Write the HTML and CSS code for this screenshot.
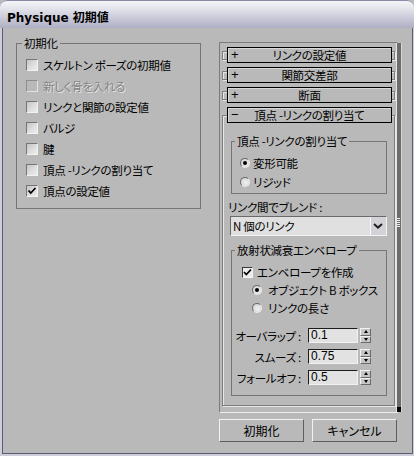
FILE: index.html
```html
<!DOCTYPE html>
<html lang="ja">
<head>
<meta charset="utf-8">
<title>Physique 初期値</title>
<link rel="stylesheet" href="styles.css">
</head>
<body>
<div class="window">
  <div class="titlebar"><span class="title">Physique 初期値</span></div>
  <div class="client">
    <fieldset class="group group-init">
      <legend>初期化</legend>
      <div class="row"><span class="cb"></span><span>スケルトン ポーズの初期値</span></div>
      <div class="row disabled"><span class="cb"></span><span>新しく骨を入れる</span></div>
      <div class="row"><span class="cb"></span><span>リンクと関節の設定値</span></div>
      <div class="row"><span class="cb"></span><span>バルジ</span></div>
      <div class="row"><span class="cb"></span><span>腱</span></div>
      <div class="row"><span class="cb"></span><span>頂点 -リンクの割り当て</span></div>
      <div class="row"><span class="cb"><svg class="check" viewBox="0 0 12 12" width="12" height="12"><polyline points="2.5,5.5 4.8,8 9.5,3" /></svg></span><span>頂点の設定値</span></div>
    </fieldset>
    <div class="right">
      <div class="panel">
        <div class="panel-body">
          <div class="rollout"><div class="rhead"><span class="sign">+</span><span class="rtitle">リンクの設定値</span><span></span></div></div>
          <div class="rollout"><div class="rhead"><span class="sign">+</span><span class="rtitle">関節交差部</span><span></span></div></div>
          <div class="rollout before-open"><div class="rhead"><span class="sign">+</span><span class="rtitle">断面</span><span></span></div></div>
          <div class="rollout open">
            <div class="rhead"><span class="sign">−</span><span class="rtitle">頂点 -リンクの割り当て</span><span></span></div>
            <fieldset class="group group-assign">
              <legend>頂点 -リンクの割り当て</legend>
              <div class="rrow"><span class="radio on"></span><span>変形可能</span></div>
              <div class="rrow"><span class="radio"></span><span>リジッド</span></div>
            </fieldset>
            <div class="blend-label">リンク間でブレンド :</div>
            <div class="dropdown">
              <span class="dd-text">N 個のリンク</span>
              <span class="dd-btn"><svg viewBox="0 0 10 6" width="10" height="6"><polyline points="1,1 5,4.6 9,1" /></svg></span>
            </div>
            <fieldset class="group group-env">
              <legend>放射状減衰エンベロープ</legend>
              <div class="erow"><span class="cb2"><svg class="check" viewBox="0 0 11 11" width="11" height="11"><polyline points="2,5 4.3,7.5 9,2.5" /></svg></span><span>エンベロープを作成</span></div>
              <div class="rrow sub"><span class="radio on"></span><span>オブジェクト B ボックス</span></div>
              <div class="rrow sub"><span class="radio"></span><span>リンクの長さ</span></div>
              <div class="spins">
                <div class="spin"><span class="slabel">オーバラップ :</span><span class="field">0.1</span><span class="arrows"><span class="arr up"></span><span class="arr down"></span></span></div>
                <div class="spin"><span class="slabel">スムーズ :</span><span class="field">0.75</span><span class="arrows"><span class="arr up"></span><span class="arr down"></span></span></div>
                <div class="spin"><span class="slabel">フォールオフ :</span><span class="field">0.5</span><span class="arrows"><span class="arr up"></span><span class="arr down"></span></span></div>
              </div>
            </fieldset>
          </div>
        </div>
        <div class="scrollbar"><span class="grip"></span><span class="thumb-end"></span></div>
      </div>
      <div class="buttons"><button class="btn">初期化</button><button class="btn">キャンセル</button></div>
    </div>
  </div>
</div>
</body>
</html>
```
FILE: styles.css
```css
html, body {
  margin: 0;
  padding: 0;
  background: #b9b9b9;
}

.window {
  width: 414px;
  height: 456px;
  box-sizing: border-box;
  display: flex;
  flex-direction: column;
  background: #cdcdd9;
  padding: 0 1px 2px 2px;
  border-radius: 7px 7px 0 0;
  overflow: hidden;
  font-family: "Noto Sans CJK JP", sans-serif;
  font-size: 11.5px;
  letter-spacing: -0.3px;
  font-feature-settings: "palt";
  color: #000;
}

.titlebar {
  height: 28px;
  box-sizing: border-box;
  margin: 0 -1px 0 -2px;
  border-top: 1px solid #8a8aa4;
  border-radius: 7px 7px 0 0;
  background: linear-gradient(to bottom, #f4f4f8 0%, #e6e6ee 25%, #c4c4d4 70%, #b0b0c4 100%);
  display: flex;
  align-items: center;
  padding: 3px 0 0 7px;
}

.title {
  font-family: "DejaVu Sans", "Noto Sans CJK JP", sans-serif;
  font-weight: bold;
  font-size: 12px;
  letter-spacing: 0;
  font-feature-settings: normal;
}

.client {
  flex: 1;
  display: flex;
  align-items: flex-start;
  background: #b9b9b9;
  border: 1px solid #5c5c74;
  border-top: none;
}

/* group boxes */
.group {
  margin: 0;
  border: 1px solid #767676;
  min-inline-size: 0;
}

.group legend {
  padding: 0 2px;
  line-height: 14px;
}

.group-init {
  width: 185px;
  box-sizing: border-box;
  margin: 8px 0 0 13px;
  padding: 4px 8px 7px 9px;
}

.group-init legend {
  margin-left: -4px;
}

.row {
  height: 21px;
  display: flex;
  align-items: center;
  gap: 5px;
  line-height: 14px;
  white-space: nowrap;
}

.cb {
  width: 12px;
  height: 12px;
  box-sizing: border-box;
  border: 1px solid;
  border-color: #767676 #f2f2f2 #f2f2f2 #767676;
  background: linear-gradient(135deg, #c4c4c4 0%, #dedede 55%, #ececec 100%);
  display: flex;
  align-items: center;
  justify-content: center;
  flex: none;
}

.check {
  display: block;
  fill: none;
  stroke: #000;
  stroke-width: 1.8;
}

.row .check {
  margin: -1px;
}

.row.disabled {
  color: #858585;
  text-shadow: 1px 1px 0 #e4e4e4;
}

.row.disabled .cb {
  background: #b9b9b9;
  border-color: #8c8c8c #e2e2e2 #e2e2e2 #8c8c8c;
}

/* right side */
.right {
  margin: 14px 0 0 18px;
}

.panel {
  width: 179px;
  height: 371px;
  box-sizing: border-box;
  display: flex;
  border: 1px solid;
  border-color: #7c7c7c #ececec #ececec #7c7c7c;
}

.panel-body {
  flex: 1;
  padding: 8px 1px 0 2px;
}

.scrollbar {
  width: 8px;
  box-sizing: border-box;
  border-left: 1px solid #e4e4e4;
  border-right: 1px solid #d6d6d6;
  background: #6c6c6c;
  display: flex;
  flex-direction: column;
  align-items: center;
}

.grip {
  width: 3px;
  height: 10px;
  margin-top: 175px;
  background: repeating-linear-gradient(to bottom, #f0f0f0 0 1px, transparent 1px 2px);
}

.thumb-end {
  margin-top: auto;
  width: 4px;
  height: 5px;
  background: #000;
}

/* rollouts */
.rollout {
  border: 1px solid #7e7e7e;
  box-shadow: inset 1px 1px 0 #e6e6e6, 1px 1px 0 #e6e6e6;
  padding: 0 2px 0 4px;
  height: 7px;
  margin-bottom: 11px;
}

.rollout.before-open {
  margin-bottom: 15px;
}

.rhead {
  height: 16px;
  box-sizing: border-box;
  margin: -5px 0 -4px 0;
  border: 1px solid #000;
  background: #b9b9b9;
  box-shadow: inset 1px 1px 0 #d8d8d8;
  display: grid;
  grid-template-columns: 18px 1fr 18px;
  line-height: 14px;
  white-space: nowrap;
}

.sign {
  padding-left: 3px;
  font-family: "Liberation Sans", sans-serif;
  font-size: 13px;
}

.rtitle {
  text-align: center;
}

.rollout.open {
  height: auto;
  margin-bottom: 0;
}

.rollout.open > .rhead {
  margin: -9px 0 0 0;
}

.group-assign {
  margin: 11px 5px 0 4px;
  padding: 5px 8px 2px 8px;
}

.group-assign legend,
.group-env legend {
  margin-left: -5px;
}

.rrow {
  height: 19px;
  display: flex;
  align-items: center;
  gap: 3px;
  line-height: 14px;
  white-space: nowrap;
}

.radio {
  width: 10px;
  height: 10px;
  box-sizing: border-box;
  border-radius: 50%;
  border: 1px solid;
  border-color: #6a6a6a #ececec #ececec #6a6a6a;
  background: radial-gradient(circle at 60% 60%, #f0f0f0 0%, #d4d4d4 80%);
  display: flex;
  align-items: center;
  justify-content: center;
  flex: none;
}

.radio.on::after {
  content: "";
  width: 4px;
  height: 4px;
  border-radius: 50%;
  background: #000;
}

.blend-label {
  margin: 6px 0 0 1px;
  line-height: 14px;
  white-space: nowrap;
}

.dropdown {
  margin: 2px 5px 0 3px;
  height: 20px;
  box-sizing: border-box;
  border: 1px solid;
  border-color: #6a6a6a #f2f2f2 #f2f2f2 #6a6a6a;
  background: #e0e0e0;
  display: flex;
  align-items: center;
}

.dd-text {
  flex: 1;
  padding-left: 2px;
  line-height: 14px;
}

.dd-btn {
  width: 16px;
  height: 18px;
  box-sizing: border-box;
  border-left: 1px solid #f6f6f6;
  background: #d2d2d8;
  display: flex;
  align-items: center;
  justify-content: center;
}

.dd-btn svg {
  fill: none;
  stroke: #222;
  stroke-width: 2;
}

.group-env {
  margin: 7px 5px 9px 4px;
  padding: 6px 8px 10px 8px;
}

.erow {
  height: 18px;
  display: flex;
  align-items: center;
  gap: 4px;
  padding-left: 2px;
  line-height: 14px;
  white-space: nowrap;
}

.cb2 {
  width: 11px;
  height: 11px;
  box-sizing: border-box;
  border: 1px solid;
  border-color: #3a3a3a #f4f4f4 #f4f4f4 #3a3a3a;
  background: #ececec;
  flex: none;
}

.cb2 .check {
  margin: -1px;
}

.rrow.sub {
  height: 18px;
  padding-left: 12px;
  gap: 6px;
}

.spins {
  margin: 11px 0 0 -8px;
  display: flex;
  flex-direction: column;
  gap: 6px;
}

.spin {
  display: flex;
  align-items: center;
  height: 15px;
}

.slabel {
  width: 69px;
  text-align: right;
  white-space: nowrap;
  line-height: 14px;
}

.field {
  width: 50px;
  height: 15px;
  box-sizing: border-box;
  margin-left: 7px;
  border: 1px solid;
  border-color: #1c1c1c #f2f2f2 #f2f2f2 #1c1c1c;
  background: #e2e2e2;
  font-family: "Liberation Sans", sans-serif;
  font-size: 12px;
  letter-spacing: 0;
  line-height: 13px;
  padding-left: 2px;
}

.arrows {
  margin-left: 2px;
  width: 11px;
  height: 15px;
  display: flex;
  flex-direction: column;
}

.arr {
  flex: 1;
  box-sizing: border-box;
  border: 1px solid;
  border-color: #f2f2f2 #6a6a6a #6a6a6a #f2f2f2;
  background: #c6c6c6;
  display: flex;
  align-items: center;
  justify-content: center;
}

.arr::after {
  content: "";
  width: 0;
  height: 0;
  border-left: 2.5px solid transparent;
  border-right: 2.5px solid transparent;
}

.arr.up::after {
  border-bottom: 3px solid #000;
}

.arr.down::after {
  border-top: 3px solid #000;
}

.buttons {
  display: flex;
  gap: 8px;
  margin-top: 6px;
}

.btn {
  width: 85px;
  height: 23px;
  box-sizing: border-box;
  margin: 0;
  padding: 0;
  border: 1px solid;
  border-color: #f2f2f2 #5e5e5e #5e5e5e #f2f2f2;
  background: #b9b9b9;
  font-family: "Noto Sans CJK JP", sans-serif;
  font-feature-settings: "palt";
  font-size: 12px;
  line-height: 14px;
  color: #000;
}
```
